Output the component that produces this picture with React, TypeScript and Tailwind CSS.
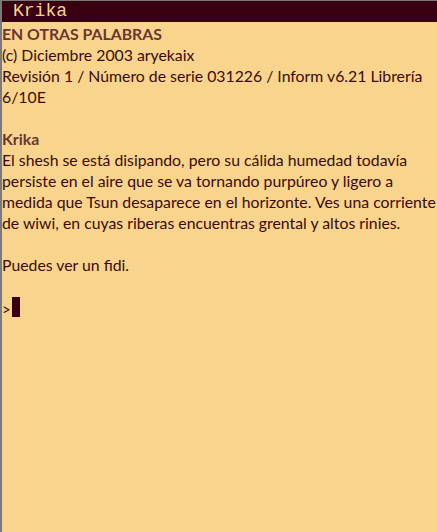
export default function App() {
  const body = "text-[#3a0a10]";
  const head = "font-bold text-[#6b3535]";
  return (
    <div className="w-[437px] h-[532px] overflow-hidden bg-[#7a7a7a] pt-[1px] pl-[2px]">
      <div className="h-full flex flex-col bg-[#f8d48c]">
        {/* Status bar */}
        <div
          className="h-[21px] bg-[#380010] text-[#f8d48c] text-[18px] leading-[21px] pl-[11px] whitespace-pre"
          style={{ fontFamily: "'Liberation Mono', monospace" }}
        >
          Krika
        </div>

        {/* Story window */}
        <div
          className={`flex-1 text-[15.8px] leading-[21px] whitespace-nowrap pt-[1px] ${body}`}
          style={{ fontFamily: "Lato, 'Liberation Sans', sans-serif" }}
        >
          <div className={head}>EN OTRAS PALABRAS</div>
          <div>(c) Diciembre 2003 aryekaix</div>
          <div>Revisión 1 / Número de serie 031226 / Inform v6.21 Librería</div>
          <div>6/10E</div>
          <div className="h-[21px]" />
          <div className={head}>Krika</div>
          <div>El shesh se está disipando, pero su cálida humedad todavía</div>
          <div>persiste en el aire que se va tornando purpúreo y ligero a</div>
          <div>medida que Tsun desaparece en el horizonte. Ves una corriente</div>
          <div>de wiwi, en cuyas riberas encuentras grental y altos rinies.</div>
          <div className="h-[21px]" />
          <div>Puedes ver un fidi.</div>
          <div className="h-[21px]" />
          <div className="flex items-end h-[21px]">
            <span className="text-[15px] leading-[16px] mr-[1px]">&gt;</span>
            <span className="inline-block w-[8px] h-[20px] bg-[#380010]" />
          </div>
        </div>
      </div>
    </div>
  );
}
